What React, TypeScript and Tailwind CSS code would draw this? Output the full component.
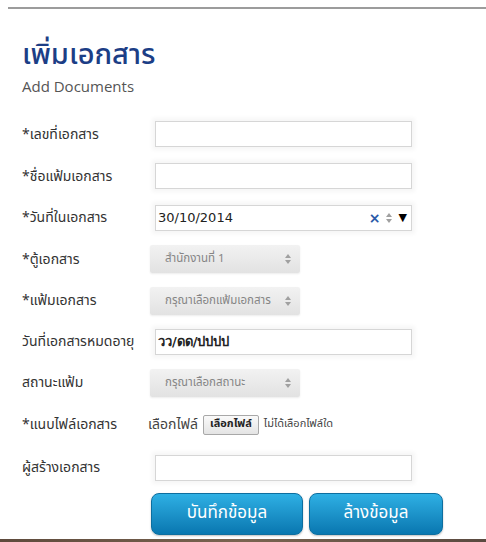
import React from 'react';

const TextBox: React.FC<{ value?: string; bold?: boolean; children?: React.ReactNode }> = ({ value, bold, children }) => (
  <div className="ml-[5px] w-[257px] h-[26px] bg-white border border-[#d6d6d6] shadow-[0_0_4px_3px_rgba(0,0,0,0.04)] flex items-center px-[2px]">
    <span className={`flex-1 text-[13px] text-[#222] font-['DejaVu_Sans',Verdana,sans-serif] ${bold ? 'font-bold' : ''}`}>
      {value}
    </span>
    {children}
  </div>
);

const Updown: React.FC = () => (
  <svg width="8" height="12" viewBox="0 0 8 12" className="shrink-0">
    <path d="M4 1 L7 5 L1 5 Z" fill="#a0a0a0" />
    <path d="M4 11 L7 7 L1 7 Z" fill="#a0a0a0" />
  </svg>
);

const SelectBox: React.FC<{ text: string }> = ({ text }) => (
  <div className="w-[150px] h-[28px] rounded-[2px] bg-gradient-to-b from-[#f2f2f2] to-[#e2e2e2] shadow-[0_1px_2px_rgba(0,0,0,0.08)] flex items-center pl-[15px] pr-[8px]">
    <span className="flex-1 text-[11.5px] text-[#858585] whitespace-nowrap overflow-hidden">{text}</span>
    <Updown />
  </div>
);

const Row: React.FC<{ label: string; h: string; children: React.ReactNode }> = ({ label, h, children }) => (
  <div className={`flex items-center ${h}`}>
    <div className="w-[128px] text-[14px] text-[#333]">{label}</div>
    <div className="flex items-center">{children}</div>
  </div>
);

export default function App() {
  return (
    <div className="w-[486px] h-[542px] bg-white relative overflow-hidden font-['Noto_Sans_Thai','Noto_Sans','DejaVu_Sans',sans-serif]">
      <div className="pt-[7px] pl-[8px]">
        <div className="h-[2px] bg-[#9c9c9c]" />
      </div>

      <div className="pl-[22px] pt-[28px]">
        <h1 className="text-[29px] leading-[36px] text-[#1c3e86] font-medium">เพิ่มเอกสาร</h1>
        <div className="text-[15px] leading-[18px] text-[#555] mt-[4px] font-['Open_Sans','Noto_Sans',sans-serif]">Add Documents</div>

        <div className="mt-[18px]">
          <Row label="*เลขที่เอกสาร" h="h-[42px]"><TextBox /></Row>
          <Row label="*ชื่อแฟ้มเอกสาร" h="h-[42px]"><TextBox /></Row>
          <Row label="*วันที่ในเอกสาร" h="h-[41px]">
            <TextBox value="30/10/2014">
              <span className="text-[#2b5aa8] font-bold text-[14px] leading-none mr-[4px] font-['DejaVu_Sans',sans-serif]">×</span>
              <Updown />
              <span className="ml-[6px] mr-[2px] text-[11px] text-black leading-none">▼</span>
            </TextBox>
          </Row>
          <Row label="*ตู้เอกสาร" h="h-[42px]"><SelectBox text="สำนักงานที่ 1" /></Row>
          <Row label="*แฟ้มเอกสาร" h="h-[41px]"><SelectBox text="กรุณาเลือกแฟ้มเอกสาร" /></Row>
          <Row label="วันที่เอกสารหมดอายุ" h="h-[41px]"><TextBox value="วว/ดด/ปปปป" bold /></Row>
          <Row label="สถานะแฟ้ม" h="h-[41px]"><SelectBox text="กรุณาเลือกสถานะ" /></Row>
          <Row label="*แนบไฟล์เอกสาร" h="h-[43px]">
            <span className="text-[14px] text-[#444] ml-[-2px]">เลือกไฟล์</span>
            <span className="ml-[5px] h-[20px] px-[6px] border border-[#a8a8a8] rounded-[2px] bg-gradient-to-b from-[#fafafa] to-[#e4e4e4] text-[11px] font-bold text-[#222] flex items-center">เลือกไฟล์</span>
            <span className="ml-[5px] text-[11px] text-[#444]">ไม่ได้เลือกไฟล์ใด</span>
          </Row>
          <Row label="ผู้สร้างเอกสาร" h="h-[43px]"><TextBox /></Row>
        </div>

        <div className="flex gap-[6px] ml-[129px] mt-[4px]">
          <button className="w-[152px] h-[42px] rounded-[8px] border border-[#0d6e9f] bg-gradient-to-b from-[#2eb0e4] to-[#0877b0] text-white text-[17px] shadow-[0_1px_2px_rgba(0,0,0,0.25)]">บันทึกข้อมูล</button>
          <button className="w-[134px] h-[42px] rounded-[8px] border border-[#0d6e9f] bg-gradient-to-b from-[#2eb0e4] to-[#0877b0] text-white text-[17px] shadow-[0_1px_2px_rgba(0,0,0,0.25)]">ล้างข้อมูล</button>
        </div>
      </div>

      <div className="absolute left-0 right-0 bottom-0 h-[3px] bg-gradient-to-r from-[#5e4a3c] via-[#7a6450] to-[#5a4a40]" />
    </div>
  );
}
